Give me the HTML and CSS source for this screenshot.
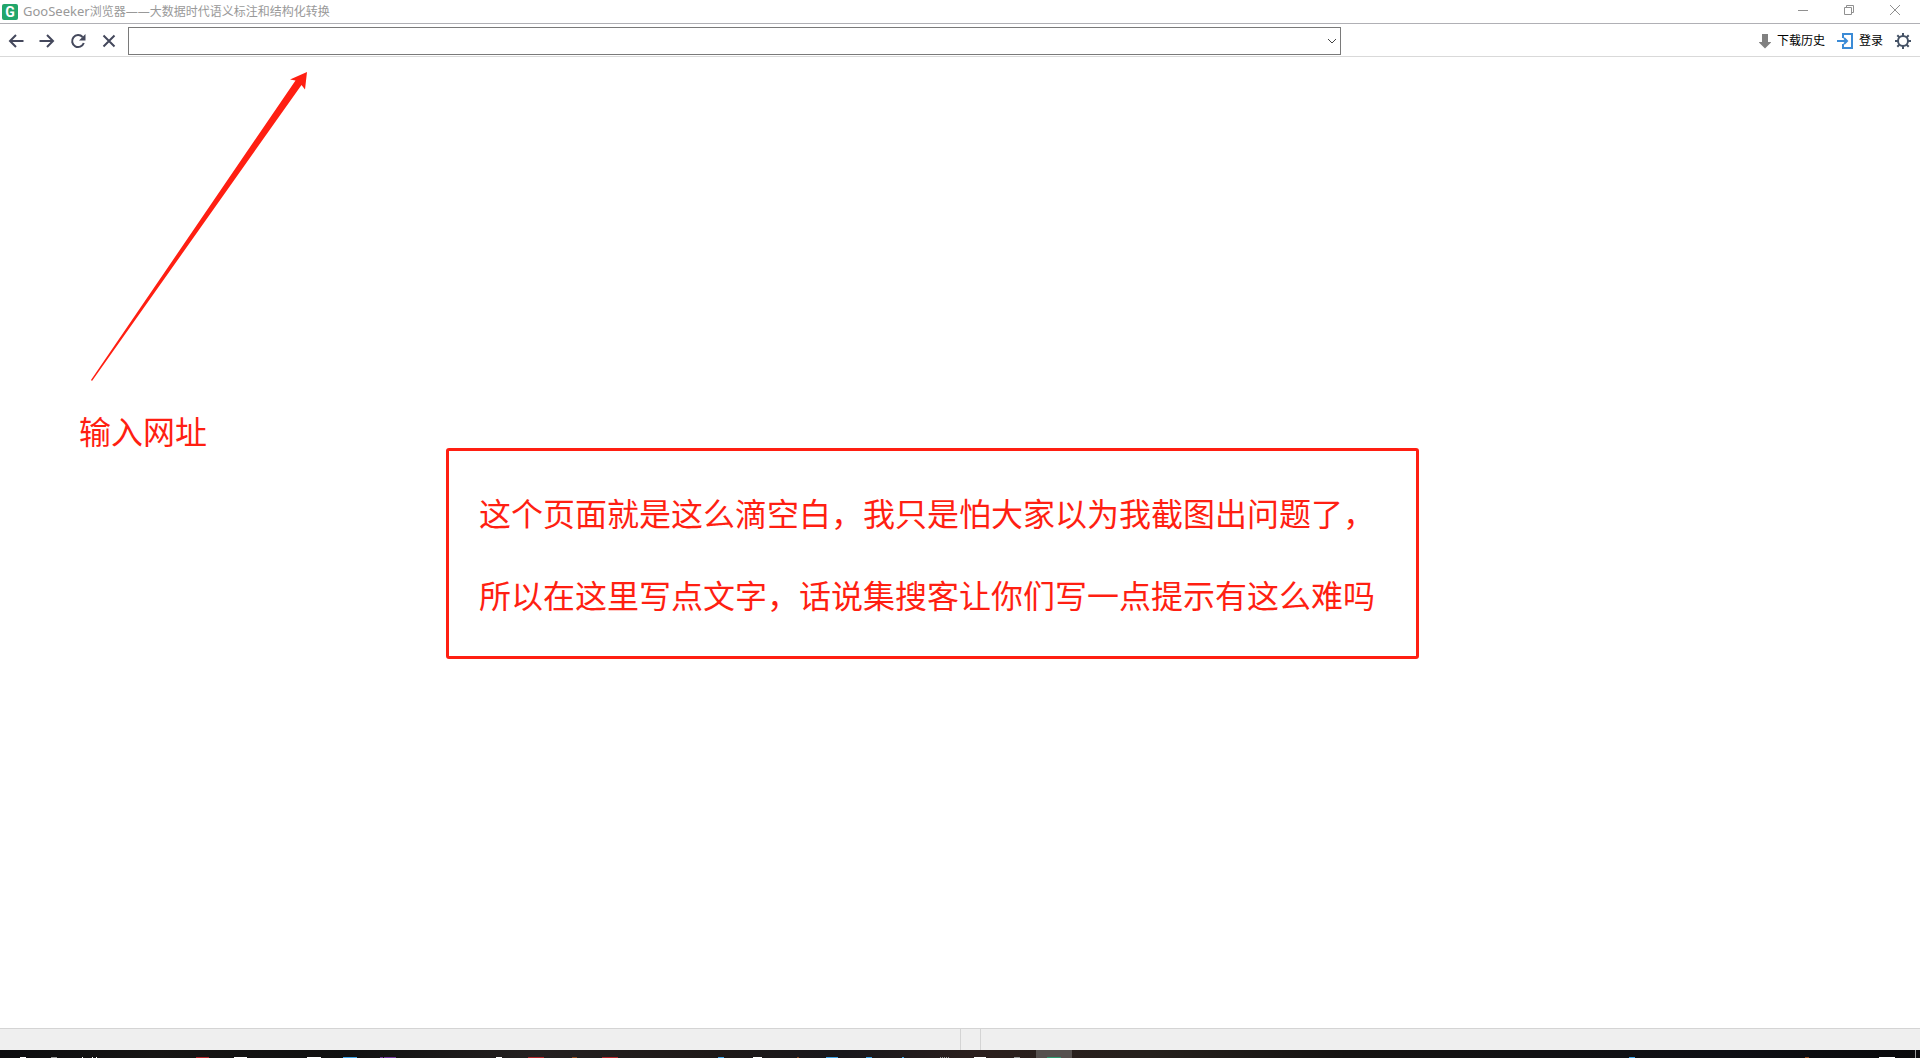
FILE: index.html
```html
<!DOCTYPE html>
<html lang="zh-CN">
<head>
<meta charset="utf-8">
<title>GooSeeker浏览器</title>
<link rel="stylesheet" href="styles.css">
</head>
<body>
<header class="titlebar">
  <span class="logo">G</span>
  <h1 class="title"><span class="brand">GooSeeker</span>浏览器——大数据时代语义标注和结构化转换</h1>
  <div class="window-controls">
    <button class="window-button" aria-label="最小化"><svg width="10" height="10" viewBox="0 0 10 10"><path d="M0 5.5h10"/></svg></button>
    <button class="window-button" aria-label="还原"><svg width="10" height="10" viewBox="0 0 10 10"><path d="M.5 2.5h7v7h-7zM2.5 2.5v-2h7v7h-2"/></svg></button>
    <button class="window-button" aria-label="关闭"><svg width="10" height="10" viewBox="0 0 10 10"><path d="M0 0l10 10M10 0L0 10"/></svg></button>
  </div>
</header>
<div class="toolbar">
  <nav class="nav">
    <button class="nav-button" aria-label="后退"><svg width="16" height="16" viewBox="0 0 16 16"><path d="M15.500 8H2M8 2L2 8l6 6"/></svg></button>
    <button class="nav-button" aria-label="前进"><svg width="16" height="16" viewBox="0 0 16 16"><path d="M.5 8H14M8 2l6 6-6 6"/></svg></button>
    <button class="nav-button" aria-label="刷新"><svg width="16" height="16" viewBox="0 0 16 16"><path d="M12.600 4A6 6 0 1 0 13.800 10"/><path class="solid" d="M15.500 1v6.500H9z"/></svg></button>
    <button class="nav-button" aria-label="停止"><svg width="16" height="16" viewBox="0 0 16 16"><path d="M2.500 2.500l11 11M13.500 2.500l-11 11"/></svg></button>
  </nav>
  <div class="address">
    <input class="address-input" type="text" aria-label="网址">
    <button class="address-toggle" aria-label="展开"><svg width="10" height="6" viewBox="0 0 10 6"><path d="M1 1l4 4 4-4"/></svg></button>
  </div>
  <div class="tools">
    <button class="tool"><svg width="12" height="16" viewBox="0 0 12 16"><path fill="#808080" d="M3 1h6v8h3.500L6 15.500-.5 9H3z"/></svg>下载历史</button>
    <button class="tool"><svg class="login" width="18" height="18" viewBox="0 0 18 18"><path d="M6 6V2h9v14H6v-4"/><path d="M0 9h10M7 6l3 3-3 3"/></svg>登录</button>
    <button class="tool" aria-label="设置"><svg class="gear" width="16" height="16" viewBox="0 0 16 16"><circle cx="8" cy="8" r="5"/><path d="M8 0v3M8 13v3M0 8h3M13 8h3M2.300 2.300l2 2M11.700 11.700l2 2M13.700 2.300l-2 2M4.300 11.700l-2 2"/></svg></button>
  </div>
</div>
<main class="page">
  <svg class="arrow" width="218" height="310" viewBox="0 0 218 310"><path d="M1 308L205.500 8.500 200 7.500 217 0l-2 17.500-3.500-4.500L2 309z"/></svg>
  <p class="note label">输入网址</p>
  <div class="note callout">
    <p>这个页面就是这么滴空白，我只是怕大家以为我截图出问题了，</p>
    <p>所以在这里写点文字，话说集搜客让你们写一点提示有这么难吗</p>
  </div>
</main>
<footer class="statusbar"><span></span><span></span><span></span></footer>
<svg class="taskbar" viewBox="0 0 1920 8" preserveAspectRatio="none" shape-rendering="crispEdges">
  <defs><linearGradient id="desk"><stop offset="0" stop-color="#0c0c0f"/><stop offset=".08" stop-color="#161514"/><stop offset=".18" stop-color="#101010"/><stop offset=".28" stop-color="#242020"/><stop offset=".37" stop-color="#1e1918"/><stop offset=".44" stop-color="#18171b"/><stop offset=".51" stop-color="#2b1f1d"/><stop offset=".6" stop-color="#25201c"/><stop offset=".7" stop-color="#151312"/><stop offset=".9" stop-color="#0e0f14"/><stop offset="1" stop-color="#09090b"/></linearGradient></defs>
  <path fill="url(#desk)" d="M0 0h1920v8H0z"/>
  <path fill="#55504e" d="M1036 0h36v8h-36z"/>
  <path fill="#fff" d="M20 7h6v1h-6zM82 7h1v1h-1zM92 7h1v1h-1zM96 7h1v1h-1zM234 7h13v1h-13zM307 7h14v1h-14zM496 7h6v1h-6zM753 7h9v1h-9zM974 7h12v1h-12zM1879 7h16v1h-16z"/>
  <path fill="#999" d="M51 7h6v1h-6zM940 7h1v1h-1zM942 7h1v1h-1zM944 7h1v1h-1zM946 7h1v1h-1zM948 7h1v1h-1zM1014 7h6v1h-6zM1915 0h1v8h-1z"/>
  <path fill="#b3262b" d="M196 7h13v1h-13zM528 7h16v1h-16zM602 7h16v1h-16z"/>
  <path fill="#42a5e8" d="M343 7h14v1h-14zM718 7h6v1h-6zM826 7h12v1h-12zM866 7h6v1h-6zM902 7h2v1h-2zM1629 7h6v1h-6z"/>
  <path fill="#74389c" d="M380 7h3v1h-3zM384 7h12v1h-12z"/>
  <path fill="#8e4a20" d="M572 7h5v1h-5zM797 7h2v1h-2zM1805 7h4v1h-4z"/>
  <path fill="#2c9b70" d="M1047 7h14v1h-14z"/>
</svg>
</body>
</html>
```
FILE: styles.css
```css
* {
  box-sizing: border-box;
}

body {
  display: flex;
  flex-direction: column;
  min-height: 100vh;
  margin: 0;
  overflow: hidden;
  background: #fff;
  font: 12px/16px "Noto Sans", "Noto Sans CJK SC", sans-serif;
}

svg {
  display: block;
  flex: none;
}

h1,
p {
  margin: 0;
}

button {
  display: flex;
  align-items: center;
  justify-content: center;
  padding: 0;
  border: 0;
  background: none;
  color: #000;
  font: inherit;
}

.titlebar {
  display: flex;
  align-items: center;
  height: 24px;
  padding-left: 2px;
  border-bottom: 1px solid #b0b0b5;
}

.logo {
  width: 16px;
  height: 16px;
  border-radius: 2px;
  background: #22a66b;
  color: #fff;
  font: bold 14px/16px Roboto, sans-serif;
  text-align: center;
}

.title {
  flex: 1;
  padding-left: 5px;
  color: #999;
  font-size: 12px;
  font-weight: 400;
}

.brand {
  font-size: 13px;
}

.window-controls {
  display: flex;
  align-self: flex-start;
  padding-right: 2px;
}

.window-button {
  width: 46px;
  height: 20px;
}

.window-button svg {
  fill: none;
  stroke: #909090;
}

.toolbar {
  display: grid;
  grid-template-columns: 124px 1fr 575px;
  column-gap: 4px;
  height: 33px;
  padding-top: 3px;
  border-bottom: 1px solid #d9d9d9;
}

.nav {
  display: flex;
}

.nav-button {
  flex: 1;
  height: 28px;
}

.nav-button svg {
  fill: none;
  stroke: #44485c;
  stroke-width: 2;
}

.nav-button .solid {
  fill: #44485c;
  stroke: none;
}

.address {
  display: flex;
  height: 28px;
  border: 1px solid #7a7a7a;
}

.address-input {
  flex: 1;
  min-width: 0;
  border: 0;
  outline: 0;
  font: inherit;
}

.address-toggle {
  width: 16px;
}

.address-toggle svg {
  fill: none;
  stroke: #444;
}

.tools {
  display: flex;
  align-items: center;
  justify-content: flex-end;
  gap: 12px;
  height: 28px;
  padding-right: 9px;
}

.tool {
  gap: 6px;
}

.tool + .tool {
  gap: 4px;
}

.login {
  fill: none;
  stroke: #3b8bd6;
  stroke-width: 2;
}

.gear {
  fill: none;
  stroke: #465366;
  stroke-width: 2;
}

.page {
  position: relative;
  flex: 1;
}

.arrow {
  position: absolute;
  top: 15px;
  left: 90px;
  fill: #ff1f12;
}

.note {
  position: absolute;
  color: #ff1f12;
  font: 400 32px/82px "Noto Sans CJK SC", sans-serif;
  white-space: nowrap;
}

.label {
  top: 332px;
  left: 79px;
}

.callout {
  top: 391px;
  left: 446px;
  width: 973px;
  padding: 20px 30px 21px;
  border: 3px solid #ff1f12;
  border-radius: 3px;
}

.statusbar {
  display: grid;
  grid-template-columns: 50% 20px 1fr;
  height: 22px;
  border-top: 1px solid #d4d4d4;
  background: #efefef;
}

.statusbar span + span {
  border-left: 1px solid #d4d4d4;
}

.taskbar {
  width: 100%;
  height: 8px;
}
```
